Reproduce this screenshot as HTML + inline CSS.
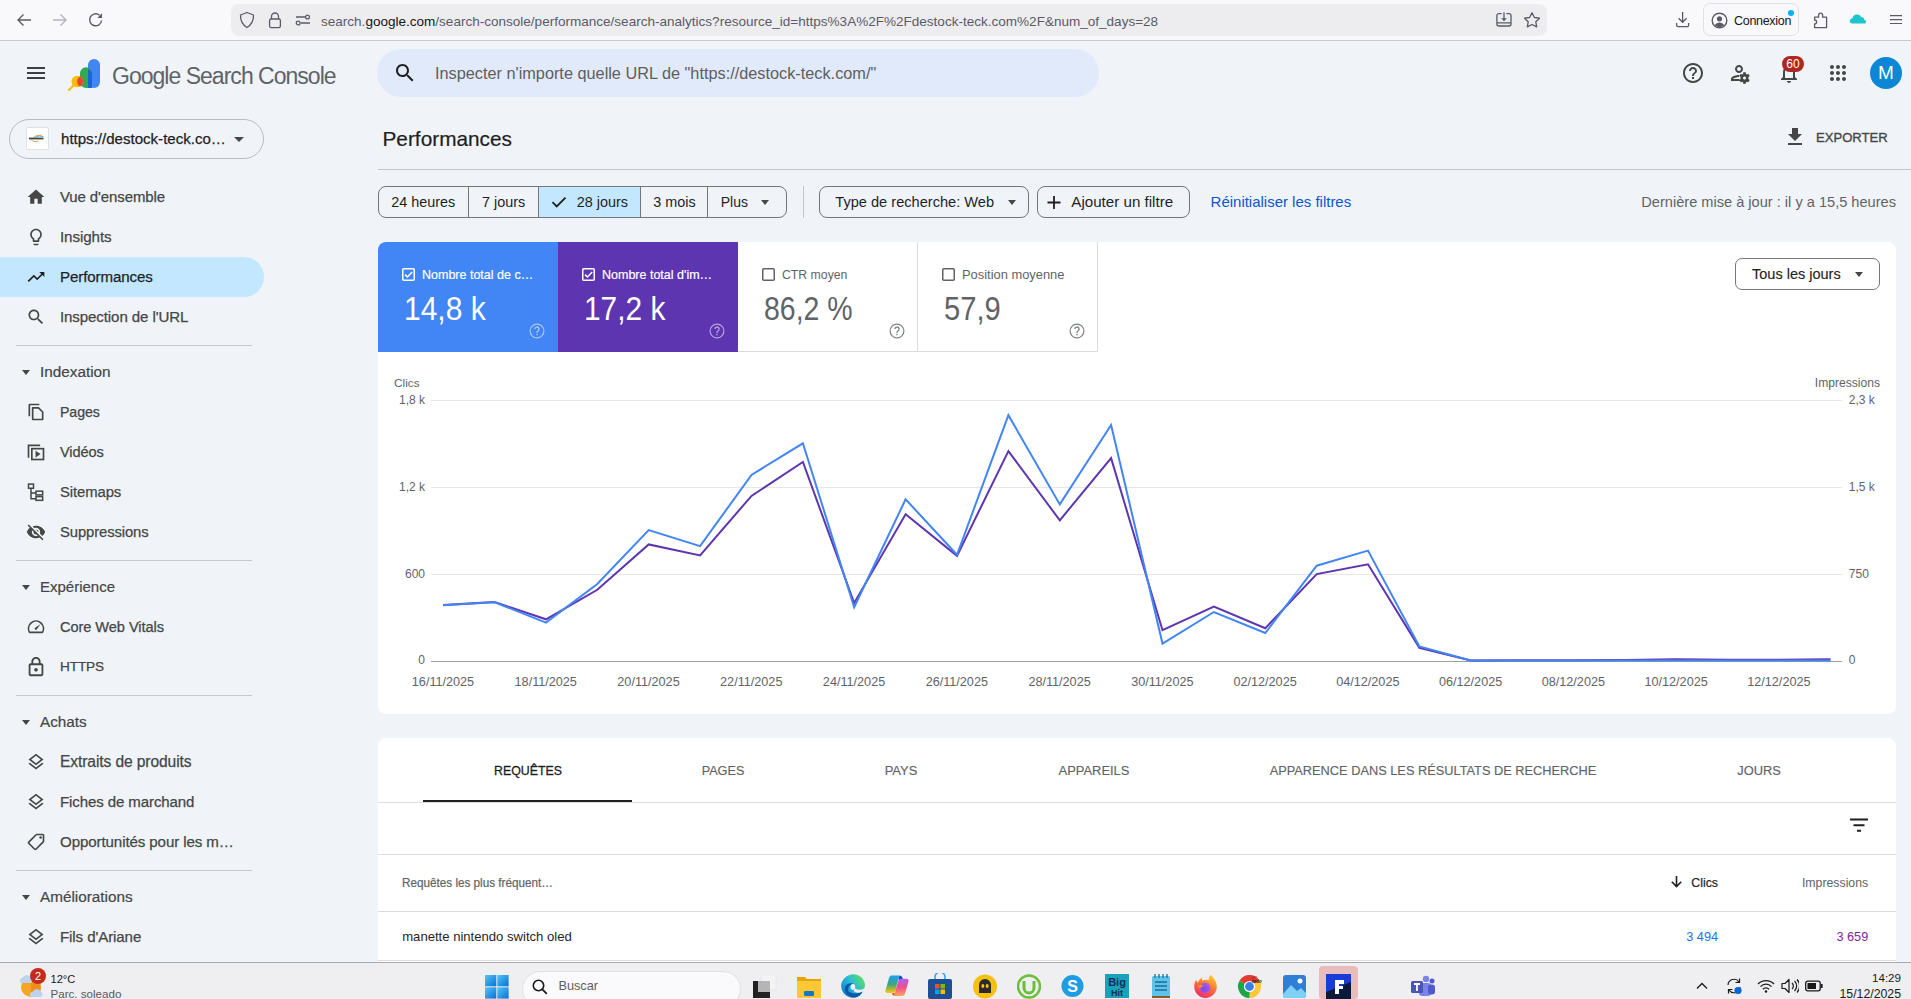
<!DOCTYPE html>
<html><head><meta charset="utf-8">
<style>
*{box-sizing:border-box;margin:0;padding:0}
html,body{width:1911px;height:999px;overflow:hidden;background:#f0f4f9;font-family:"Liberation Sans",sans-serif;color:#1f1f1f}
.a{position:absolute;white-space:nowrap}
svg{display:block}
/* browser chrome */
#chrome{position:absolute;left:0;top:0;width:1911px;height:41px;background:#f9f9fb;border-bottom:1px solid #c9c9cb}
#url{position:absolute;left:231px;top:4px;width:1316px;height:32px;background:#ededf0;border-radius:8px}
/* sidebar */
.nav{position:absolute;left:60px;font-size:15px;color:#444746;line-height:20px;letter-spacing:-0.1px}
.navi{position:absolute;left:27px;width:18px;height:18px}
.sec{position:absolute;left:40px;font-size:15px;color:#444746;line-height:20px}
.tri{position:absolute;left:22px;width:0;height:0;border-left:4.5px solid transparent;border-right:4.5px solid transparent;border-top:5px solid #444746}
.div{position:absolute;left:16px;width:236px;height:1px;background:#c7c7c7}
/* chips */
.chip{position:absolute;top:186px;height:32px;border:1px solid #747775;font-size:15px;color:#1f1f1f;line-height:30px}
/* tiles */
.tile{position:absolute;top:242px;height:110px;width:180px}
.tlab{position:absolute;left:43px;top:266px;font-size:13px;line-height:16px}
.tval{position:absolute;left:24px;top:288px;font-size:33px;line-height:40px}
/* chart */
.ylab{position:absolute;font-size:12px;color:#5f6368;line-height:14px}
.xlab{position:absolute;top:674px;font-size:12.6px;color:#5f6368;line-height:14px;width:100px;text-align:center}
.tab{position:absolute;top:762px;font-size:15px;color:#5f6368;line-height:16px}
</style></head><body>

<!-- ============ BROWSER CHROME ============ -->
<div id="chrome"></div>
<div id="url"></div>
<svg class="a" style="left:16px;top:13px" width="16" height="14" viewBox="0 0 16 14"><path d="M15 7H2M7.5 1.5L2 7l5.5 5.5" fill="none" stroke="#5b5b66" stroke-width="1.4"/></svg>
<svg class="a" style="left:52px;top:13px" width="16" height="14" viewBox="0 0 16 14"><path d="M1 7h13M8.5 1.5L14 7l-5.5 5.5" fill="none" stroke="#b4b4bb" stroke-width="1.4"/></svg>
<svg class="a" style="left:88px;top:12px" width="16" height="16" viewBox="0 0 16 16"><path d="M13.6 8.5A6 6 0 1 1 11.5 3.2" fill="none" stroke="#5b5b66" stroke-width="1.4"/><path d="M14 1.2V6H9.3z" fill="#5b5b66"/></svg>
<svg class="a" style="left:239px;top:11px" width="16" height="18" viewBox="0 0 16 18"><path d="M8 1.5L14.5 4c.2 5.5-1.8 9.5-6.5 12.5C3.3 13.5 1.3 9.5 1.5 4z" fill="none" stroke="#5b5b66" stroke-width="1.3" stroke-linejoin="round"/></svg>
<svg class="a" style="left:268px;top:11px" width="14" height="18" viewBox="0 0 14 18"><path d="M3.5 8V5.5a3.5 3.5 0 0 1 7 0V8" fill="none" stroke="#5b5b66" stroke-width="1.3"/><rect x="1.6" y="8" width="10.8" height="8.6" rx="1.6" fill="none" stroke="#5b5b66" stroke-width="1.3"/></svg>
<svg class="a" style="left:295px;top:14px" width="16" height="12" viewBox="0 0 16 12"><path d="M1 3h9M6 9h9" stroke="#5b5b66" stroke-width="1.3"/><circle cx="12.5" cy="3" r="1.9" fill="none" stroke="#5b5b66" stroke-width="1.3"/><circle cx="3.2" cy="9" r="1.9" fill="none" stroke="#5b5b66" stroke-width="1.3"/></svg>
<div class="a" style="left:321px;top:12.8px;font-size:13.54px;line-height:18px;color:#5b5b66">search.<span style="color:#15141a">google.com</span>/search-console/performance/search-analytics?resource_id=https%3A%2F%2Fdestock-teck.com%2F&amp;num_of_days=28</div>
<svg class="a" style="left:1494px;top:10px" width="20" height="20" viewBox="0 0 20 20"><path d="M7.6 3.6H4.9a2 2 0 0 0-2 2V14a2 2 0 0 0 2 2H15a2 2 0 0 0 2-2V5.6a2 2 0 0 0-2-2H12.4M2.9 12.9H17M10 2.2V9" fill="none" stroke="#5b5b66" stroke-width="1.3"/><path d="M7.2 8.2h5.6L10 11.2z" fill="#5b5b66"/></svg>
<svg class="a" style="left:1522px;top:11px" width="20" height="18" viewBox="0 0 20 18"><path d="M10 1.8l2.4 4.7 5.1.7-3.7 3.6.9 5.1L10 13.5l-4.7 2.4.9-5.1-3.7-3.6 5.1-.7z" fill="none" stroke="#5b5b66" stroke-width="1.3" stroke-linejoin="round"/></svg>
<svg class="a" style="left:1674px;top:10px" width="17" height="18" viewBox="0 0 17 18"><path d="M8.6 2.1V12.3M4.6 8.3l4 4 4-4M2.6 13v2.2a1.4 1.4 0 0 0 1.4 1.4h9.2a1.4 1.4 0 0 0 1.4-1.4V13" fill="none" stroke="#5b5b66" stroke-width="1.3"/></svg>
<div class="a" style="left:1703px;top:3.3px;width:96px;height:33px;border:1px solid #e0e0e6;border-radius:7px;background:#f9f9fb"></div>
<svg class="a" style="left:1711px;top:12px" width="17" height="17" viewBox="0 0 17 17"><circle cx="8.5" cy="8.5" r="7.3" fill="none" stroke="#5b5b66" stroke-width="1.4"/><circle cx="8.5" cy="6.8" r="2.6" fill="#5b5b66"/><path d="M3.8 13.2c1.2-2 2.8-2.8 4.7-2.8s3.5.8 4.7 2.8c-1.3 1.2-3 1.8-4.7 1.8s-3.4-.6-4.7-1.8z" fill="#5b5b66"/></svg>
<div class="a" style="left:1734px;top:13.2px;font-size:12.5px;letter-spacing:-0.3px;line-height:17px;color:#15141a">Connexion</div>
<div class="a" style="left:1788px;top:9.8px;width:6px;height:6px;border-radius:3px;background:#00b3f4"></div>
<svg class="a" style="left:1812px;top:10px" width="17" height="20" viewBox="0 0 17 20"><path d="M2.6 7.2H6.6V5.2a2 2 0 0 1 4 0V7.2H14.6V17.6H2.6V14a2 2 0 0 0 0-4z" fill="none" stroke="#5b5b66" stroke-width="1.3" stroke-linejoin="round"/></svg>
<svg class="a" style="left:1849px;top:13px" width="18" height="12" viewBox="0 0 18 12"><path d="M3.6 10.6a2.6 2.6 0 0 1-.3-5.2A4.8 4.8 0 0 1 12.2 4a2.8 2.8 0 0 1 2.9 2.8 1.9 1.9 0 0 1 .1 3.8z" fill="#1ac5cb"/></svg>
<svg class="a" style="left:1889px;top:13px" width="14" height="13" viewBox="0 0 14 13"><path d="M1 2.6h12M1 6.6h12M1 10.5h12" stroke="#5b5b66" stroke-width="1.2"/></svg>

<!-- ============ GSC HEADER ============ -->
<svg class="a" style="left:27px;top:66px" width="18" height="14" viewBox="0 0 18 14"><path d="M0 2h18M0 7h18M0 12h18" stroke="#3c4043" stroke-width="2"/></svg>
<svg class="a" style="left:66px;top:57px" width="36" height="34" viewBox="0 0 36 34"><rect x="22" y="2" width="12" height="29" rx="6" fill="#4285f4"/><path d="M20 10.2a6 6 0 0 1 6 6V31h-6a6 6 0 0 1-6-6v-8.8a6 6 0 0 1 6-6z" fill="#34a853"/><path d="M22 31V12a6 6 0 0 1 4 4.2V31z" fill="#1967d2"/><circle cx="11.3" cy="24.5" r="5.8" fill="#fbbc04"/><path d="M14 19.4a5.8 5.8 0 0 1 0 10.2 6 6 0 0 1 0-10.2z" fill="#ea4335"/><path d="M3 33l5-5" stroke="#fbbc04" stroke-width="2.2" stroke-linecap="round"/></svg>
<div class="a" style="left:112px;top:62.83px;font-size:23px;line-height:26px;letter-spacing:-0.98px;color:#5f6368">Google Search Console</div>
<div class="a" style="left:377px;top:49px;width:722px;height:48px;border-radius:24px;background:#e1eafa"></div>
<svg class="a" style="left:393px;top:61px" width="24" height="24" viewBox="0 0 24 24"><path fill="#1f1f1f" d="M15.5 14h-.79l-.28-.27C15.41 12.59 16 11.11 16 9.5 16 5.91 13.09 3 9.5 3S3 5.91 3 9.5 5.91 16 9.5 16c1.61 0 3.09-.59 4.23-1.57l.27.28v.79l5 4.99L20.49 19l-4.99-5zm-6 0C7.01 14 5 11.99 5 9.5S7.01 5 9.5 5 14 7.01 14 9.5 11.99 14 9.5 14z"/></svg>
<div class="a" style="left:435px;top:64.4px;font-size:16.3px;line-height:19px;color:#5e5e5e">Inspecter n'importe quelle URL de "https://destock-teck.com/"</div>
<svg class="a" style="left:1681px;top:61px" width="24" height="24" viewBox="0 0 24 24"><path fill="#444746" d="M11 18h2v-2h-2v2zm1-16C6.48 2 2 6.48 2 12s4.48 10 10 10 10-4.48 10-10S17.52 2 12 2zm0 18c-4.41 0-8-3.59-8-8s3.59-8 8-8 8 3.59 8 8-3.59 8-8 8zm0-14c-2.21 0-4 1.79-4 4h2c0-1.1.9-2 2-2s2 .9 2 2c0 2-3 1.75-3 5h2c0-2.25 3-2.5 3-5 0-2.21-1.79-4-4-4z"/></svg>
<svg class="a" style="left:1729px;top:61px" width="24" height="24" viewBox="0 0 24 24"><path fill="#444746" d="M10 12c2.21 0 4-1.79 4-4s-1.79-4-4-4-4 1.79-4 4 1.79 4 4 4zm0-6c1.1 0 2 .9 2 2s-.9 2-2 2-2-.9-2-2 .9-2 2-2zM4 18c.22-.72 3.31-2 6-2 0-.7.13-1.37.35-1.99C7.62 13.91 2 15.27 2 18v2h9.54c-.52-.58-.93-1.25-1.19-2H4z"/><path fill="#444746" d="M19.43 18.02c.04-.32.07-.64.07-.98s-.03-.66-.07-.98l1.11-.87a.26.26 0 0 0 .06-.34l-1.05-1.82a.26.26 0 0 0-.32-.12l-1.31.53c-.27-.21-.57-.38-.89-.52l-.2-1.39a.26.26 0 0 0-.26-.22h-2.1a.26.26 0 0 0-.26.22l-.2 1.39c-.32.13-.61.31-.89.52l-1.31-.53a.26.26 0 0 0-.32.12l-1.05 1.82a.26.26 0 0 0 .06.34l1.11.87c-.04.32-.07.65-.07.98s.03.66.07.98l-1.11.87a.26.26 0 0 0-.06.34l1.05 1.82c.06.12.2.16.32.12l1.31-.53c.27.21.57.38.89.52l.2 1.39c.02.13.13.22.26.22h2.1c.13 0 .24-.09.26-.22l.2-1.39c.32-.13.61-.31.89-.52l1.31.53c.12.05.26 0 .32-.12l1.05-1.82a.26.26 0 0 0-.06-.34l-1.11-.87zM15.5 18.54c-.83 0-1.5-.67-1.5-1.5s.67-1.5 1.5-1.5 1.5.67 1.5 1.5-.67 1.5-1.5 1.5z"/></svg>
<svg class="a" style="left:1777px;top:61px" width="24" height="24" viewBox="0 0 24 24"><path fill="#444746" d="M12 22c1.1 0 2-.9 2-2h-4c0 1.1.9 2 2 2zm6-6v-5c0-3.07-1.64-5.64-4.5-6.32V4c0-.83-.67-1.5-1.5-1.5s-1.5.67-1.5 1.5v.68C7.63 5.36 6 7.92 6 11v5l-2 2v1h16v-1l-2-2zm-2 1H8v-6c0-2.48 1.51-4.5 4-4.5s4 2.02 4 4.5v6z"/></svg>
<div class="a" style="left:1782px;top:55.5px;width:22px;height:16px;border-radius:8px;background:#b3261e;color:#fff;font-size:12px;line-height:16px;text-align:center">60</div>
<svg class="a" style="left:1826px;top:61px" width="24" height="24" viewBox="0 0 24 24"><path fill="#444746" d="M6 8c1.1 0 2-.9 2-2s-.9-2-2-2-2 .9-2 2 .9 2 2 2zm6 12c1.1 0 2-.9 2-2s-.9-2-2-2-2 .9-2 2 .9 2 2 2zm-6 0c1.1 0 2-.9 2-2s-.9-2-2-2-2 .9-2 2 .9 2 2 2zm0-6c1.1 0 2-.9 2-2s-.9-2-2-2-2 .9-2 2 .9 2 2 2zm6 0c1.1 0 2-.9 2-2s-.9-2-2-2-2 .9-2 2 .9 2 2 2zm4-8c0 1.1.9 2 2 2s2-.9 2-2-.9-2-2-2-2 .9-2 2zm-4 2c1.1 0 2-.9 2-2s-.9-2-2-2-2 .9-2 2 .9 2 2 2zm6 6c1.1 0 2-.9 2-2s-.9-2-2-2-2 .9-2 2 .9 2 2 2zm0 6c1.1 0 2-.9 2-2s-.9-2-2-2-2 .9-2 2 .9 2 2 2z"/></svg>
<div class="a" style="left:1870px;top:56.6px;width:32px;height:32px;border-radius:16px;background:#0b87d5;color:#fff;font-size:19px;line-height:32px;text-align:center">M</div>
<div class="a" style="left:8.5px;top:119px;width:255px;height:40px;border:1px solid #b9bcbf;border-radius:20px"></div>
<div class="a" style="left:25.5px;top:127.3px;width:23px;height:23px;background:#fff;border:1px solid #e0e0e0;border-radius:2px"></div>
<svg class="a" style="left:25px;top:127px" width="24" height="24" viewBox="0 0 24 24"><path d="M8.3 10.4Q11 7.6 17 8.2" fill="none" stroke="#f5a84a" stroke-width="1"/><path d="M10.2 10.4Q14 8 18.4 9.6" fill="none" stroke="#45b4ea" stroke-width="1"/><rect x="4" y="10.6" width="14.5" height="1.8" fill="#444"/><path d="M6.2 12.8Q7 13.6 8 13.8" fill="none" stroke="#45b4ea" stroke-width=".8"/><path d="M8.2 14Q11 15.4 13.5 13.6" fill="none" stroke="#f5a84a" stroke-width="1.1"/></svg>
<div class="a" style="left:61px;top:129.5px;font-size:15.07px;line-height:18px;color:#1f1f1f;-webkit-text-stroke:0.25px #1f1f1f">https://destock-teck.co…</div>
<div class="a" style="left:234px;top:137px;width:0;height:0;border-left:5px solid transparent;border-right:5px solid transparent;border-top:5px solid #444746"></div>


<!-- ============ SIDEBAR ============ -->
<div class="a" style="left:0;top:257px;width:264px;height:40px;background:#c2e7ff;border-radius:0 20px 20px 0"></div>
<svg class="a" style="left:26.0px;top:187.0px" width="20" height="20" viewBox="0 0 24 24"><path fill="#444746" d="M10 20v-6h4v6h5v-8h3L12 3 2 12h3v8z"/></svg>
<div class="nav" style="top:187.2px;font-size:14.98px;color:#444746;-webkit-text-stroke:0.25px #444746">Vue d'ensemble</div>
<svg class="a" style="left:26.0px;top:227.0px" width="20" height="20" viewBox="0 0 24 24"><path fill="#444746" d="M9 21c0 .55.45 1 1 1h4c.55 0 1-.45 1-1v-1H9v1zm3-19C8.14 2 5 5.14 5 9c0 2.380 1.19 4.47 3 5.74V17c0 .55.45 1 1 1h6c.55 0 1-.45 1-1v-2.26c1.81-1.27 3-3.36 3-5.74 0-3.86-3.14-7-7-7zm2.85 11.1l-.85.6V16h-4v-2.3l-.85-.6C7.8 12.16 7 10.63 7 9c0-2.76 2.24-5 5-5s5 2.24 5 5c0 1.63-.8 3.16-2.150 4.1z"/></svg>
<div class="nav" style="top:227.2px;font-size:15.2px;color:#444746;-webkit-text-stroke:0.25px #444746">Insights</div>
<svg class="a" style="left:26.0px;top:267.0px" width="20" height="20" viewBox="0 0 24 24"><path fill="#1f1f1f" d="M16 6l2.29 2.29-4.88 4.88-4-4L2 16.59 3.41 18l6-6 4 4 6.3-6.29L22 12V6z"/></svg>
<div class="nav" style="top:267.2px;font-size:15.1px;color:#1f1f1f;-webkit-text-stroke:0.25px #1f1f1f">Performances</div>
<svg class="a" style="left:26.0px;top:307.0px" width="20" height="20" viewBox="0 0 24 24"><path fill="#444746" d="M15.5 14h-.79l-.28-.27C15.41 12.59 16 11.11 16 9.5 16 5.91 13.09 3 9.5 3S3 5.91 3 9.5 5.91 16 9.5 16c1.61 0 3.09-.59 4.23-1.57l.27.28v.79l5 4.99L20.49 19l-4.99-5zm-6 0C7.01 14 5 11.99 5 9.5S7.01 5 9.5 5 14 7.01 14 9.5 11.99 14 9.5 14z"/></svg>
<div class="nav" style="top:307.2px;font-size:15.07px;color:#444746;-webkit-text-stroke:0.25px #444746">Inspection de l'URL</div>
<div class="div" style="top:345px"></div>
<div class="tri" style="top:369.5px"></div>
<div class="sec" style="top:362.2px;font-size:15.3px;-webkit-text-stroke:0.2px #444746">Indexation</div>
<svg class="a" style="left:26.0px;top:402.0px" width="20" height="20" viewBox="0 0 24 24"><path fill="none" stroke="#444746" stroke-width="2" d="M4 17V3.5c0-.3.2-.5.5-.5H16"/><path fill="none" stroke="#444746" stroke-width="2" stroke-linejoin="round" d="M8 7h7l5 5v9H8z"/></svg>
<div class="nav" style="top:402.2px;font-size:14.2px;color:#444746;-webkit-text-stroke:0.25px #444746">Pages</div>
<svg class="a" style="left:26.0px;top:442.0px" width="20" height="20" viewBox="0 0 24 24"><path fill="none" stroke="#444746" stroke-width="2" d="M3 19V4h14"/><rect x="7" y="8" width="14" height="13" fill="none" stroke="#444746" stroke-width="2"/><path fill="#444746" d="M11.5 10.5v8l6-4z"/></svg>
<div class="nav" style="top:442.2px;font-size:14.6px;color:#444746;-webkit-text-stroke:0.25px #444746">Vidéos</div>
<svg class="a" style="left:26.0px;top:482.0px" width="20" height="20" viewBox="0 0 24 24"><g fill="none" stroke="#444746" stroke-width="1.8"><rect x="3" y="2.5" width="6" height="5"/><rect x="12" y="11" width="8" height="4.5"/><rect x="12" y="17.5" width="8" height="4.5"/><path d="M6 7.5V20h6M6 13.2h6"/></g></svg>
<div class="nav" style="top:482.2px;font-size:14.87px;color:#444746;-webkit-text-stroke:0.25px #444746">Sitemaps</div>
<svg class="a" style="left:26.0px;top:522.0px" width="20" height="20" viewBox="0 0 24 24"><path fill="#444746" d="M12 7c2.76 0 5 2.24 5 5 0 .65-.13 1.26-.36 1.830l2.92 2.92c1.51-1.26 2.7-2.89 3.43-4.75-1.73-4.39-6-7.5-11-7.5-1.4 0-2.74.25-3.98.7l2.16 2.16C10.74 7.13 11.35 7 12 7zM2 4.27l2.28 2.28.46.46C3.08 8.3 1.78 10.02 1 12c1.73 4.39 6 7.5 11 7.5 1.55 0 3.03-.3 4.38-.84l.42.42L19.73 22 21 20.73 3.27 3 2 4.27zM7.53 9.8l1.55 1.55c-.05.21-.08.43-.08.65 0 1.66 1.34 3 3 3 .22 0 .44-.03.65-.08l1.55 1.55c-.67.33-1.41.53-2.2.53-2.76 0-5-2.24-5-5 0-.79.2-1.53.53-2.2zm4.31-.78l3.15 3.15.02-.16c0-1.66-1.34-3-3-3l-.17.01z"/></svg>
<div class="nav" style="top:522.2px;font-size:14.82px;color:#444746;-webkit-text-stroke:0.25px #444746">Suppressions</div>
<div class="div" style="top:560px"></div>
<div class="tri" style="top:584.5px"></div>
<div class="sec" style="top:577.2px;font-size:15px;-webkit-text-stroke:0.2px #444746">Expérience</div>
<svg class="a" style="left:26.0px;top:617.0px" width="20" height="20" viewBox="0 0 24 24"><path fill="none" stroke="#444746" stroke-width="2" d="M4.3 18.5A9 9 0 1 1 19.7 18.5z" stroke-linejoin="round"/><path fill="#444746" d="M10.6 14.6a1.6 1.6 0 0 0 2.3.3l4.3-6.3-6.3 4.3a1.6 1.6 0 0 0-.3 1.7z"/></svg>
<div class="nav" style="top:617.2px;font-size:14.66px;color:#444746;-webkit-text-stroke:0.25px #444746">Core Web Vitals</div>
<svg class="a" style="left:25.0px;top:656.0px" width="22" height="22" viewBox="0 0 24 24"><path fill="#444746" d="M18 8h-1V6c0-2.76-2.24-5-5-5S7 3.24 7 6v2H6c-1.1 0-2 .9-2 2v10c0 1.1.9 2 2 2h12c1.1 0 2-.9 2-2V10c0-1.1-.9-2-2-2zM9 6c0-1.66 1.34-3 3-3s3 1.34 3 3v2H9V6zm9 14H6V10h12v10zm-6-3c1.1 0 2-.9 2-2s-.9-2-2-2-2 .9-2 2 .9 2 2 2z"/></svg>
<div class="nav" style="top:657.2px;font-size:13.6px;color:#444746;-webkit-text-stroke:0.25px #444746">HTTPS</div>
<div class="div" style="top:695px"></div>
<div class="tri" style="top:719.5px"></div>
<div class="sec" style="top:712.2px;font-size:15.3px;-webkit-text-stroke:0.2px #444746">Achats</div>
<svg class="a" style="left:26.0px;top:752.0px" width="20" height="20" viewBox="0 0 24 24"><path fill="#444746" d="M11.99 18.54l-7.37-5.73L3 14.07l9 7 9-7-1.63-1.27-7.38 5.74zM12 16l7.36-5.73L21 9l-9-7-9 7 1.63 1.27L12 16zm0-11.47L17.74 9 12 13.47 6.26 9 12 4.53z"/></svg>
<div class="nav" style="top:752.2px;font-size:15.6px;color:#444746;-webkit-text-stroke:0.25px #444746">Extraits de produits</div>
<svg class="a" style="left:26.0px;top:792.0px" width="20" height="20" viewBox="0 0 24 24"><path fill="#444746" d="M11.99 18.54l-7.37-5.73L3 14.07l9 7 9-7-1.63-1.27-7.38 5.74zM12 16l7.36-5.73L21 9l-9-7-9 7 1.63 1.27L12 16zm0-11.47L17.74 9 12 13.47 6.26 9 12 4.53z"/></svg>
<div class="nav" style="top:792.2px;font-size:15.04px;color:#444746;-webkit-text-stroke:0.25px #444746">Fiches de marchand</div>
<svg class="a" style="left:26.0px;top:832.0px" width="20" height="20" viewBox="0 0 24 24"><g transform="translate(24 0) scale(-1 1)"><path fill="#444746" d="M21.41 11.41l-8.83-8.83c-.37-.37-.88-.58-1.41-.58H4c-1.1 0-2 .9-2 2v7.17c0 .53.21 1.04.59 1.41l8.83 8.83c.78.78 2.05.78 2.83 0l7.17-7.17c.78-.78.78-2.04-.01-2.83zM12.83 20L4 11.17V4h7.17L20 12.83 12.83 20z"/><circle cx="6.5" cy="6.5" r="1.5" fill="#444746"/></g></svg>
<div class="nav" style="top:832.2px;font-size:15.1px;color:#444746;-webkit-text-stroke:0.25px #444746">Opportunités pour les m…</div>
<div class="div" style="top:870px"></div>
<div class="tri" style="top:894.5px"></div>
<div class="sec" style="top:887.2px;font-size:15.3px;-webkit-text-stroke:0.2px #444746">Améliorations</div>
<svg class="a" style="left:26.0px;top:927.0px" width="20" height="20" viewBox="0 0 24 24"><path fill="#444746" d="M11.99 18.54l-7.37-5.73L3 14.07l9 7 9-7-1.63-1.27-7.38 5.74zM12 16l7.36-5.73L21 9l-9-7-9 7 1.63 1.27L12 16zm0-11.47L17.74 9 12 13.47 6.26 9 12 4.53z"/></svg>
<div class="nav" style="top:927.2px;font-size:15.08px;color:#444746;-webkit-text-stroke:0.25px #444746">Fils d'Ariane</div>
<!-- ============ MAIN ============ -->
<div class="a" style="left:382.5px;top:127.13px;font-size:20.8px;line-height:1.15;color:#1f1f1f;-webkit-text-stroke:0.2px #1f1f1f">Performances</div>
<svg class="a" style="left:1783px;top:125px" width="24" height="24" viewBox="0 0 24 24"><path fill="#444746" d="M19 9h-4V3H9v6H5l7 7 7-7zM5 18v2h14v-2H5z"/></svg>
<div class="a" style="left:1815.6px;top:130.28px;font-size:13.7px;line-height:1.15;color:#444746;transform:scaleX(0.955);transform-origin:0 0;-webkit-text-stroke:0.35px #444746">EXPORTER</div>
<div class="a" style="left:378px;top:169px;width:1533px;height:1px;background:#c4c7c5"></div>
<div class="a" style="left:378px;top:186px;width:409px;height:32px;border:1px solid #747775;border-radius:8px;overflow:hidden"><div style="position:absolute;left:160px;top:0;width:102px;height:30px;background:#c2e7ff"></div></div>
<div class="a" style="left:468.0px;top:186px;width:1px;height:32px;background:#747775"></div>
<div class="a" style="left:538.0px;top:186px;width:1px;height:32px;background:#747775"></div>
<div class="a" style="left:639.9px;top:186px;width:1px;height:32px;background:#747775"></div>
<div class="a" style="left:707.0px;top:186px;width:1px;height:32px;background:#747775"></div>
<div class="a" style="left:391.2px;top:193.53px;font-size:14.4px;line-height:1.15;color:#1f1f1f;">24 heures</div>
<div class="a" style="left:482.1px;top:193.53px;font-size:14.4px;line-height:1.15;color:#1f1f1f;">7 jours</div>
<svg class="a" style="left:551px;top:196px" width="16" height="12" viewBox="0 0 16 12"><path d="M1.5 6.2l4.2 4.2L14.5 1.6" fill="none" stroke="#1f1f1f" stroke-width="1.8"/></svg>
<div class="a" style="left:576.7px;top:193.53px;font-size:14.4px;line-height:1.15;color:#1f1f1f;">28 jours</div>
<div class="a" style="left:653.2px;top:193.53px;font-size:14.4px;line-height:1.15;color:#1f1f1f;">3 mois</div>
<div class="a" style="left:720.7px;top:193.90px;font-size:14.0px;line-height:1.15;color:#1f1f1f;">Plus</div>
<div class="a" style="left:760.5px;top:200px;width:0;height:0;border-left:4.5px solid transparent;border-right:4.5px solid transparent;border-top:5px solid #444746"></div>
<div class="a" style="left:803px;top:186px;width:1px;height:32px;background:#c4c7c5"></div>
<div class="a" style="left:819px;top:186px;width:210px;height:32px;border:1px solid #747775;border-radius:8px"></div>
<div class="a" style="left:835.3px;top:194.15px;font-size:14.6px;line-height:1.15;color:#1f1f1f;">Type de recherche: Web</div>
<div class="a" style="left:1007.5px;top:200px;width:0;height:0;border-left:4.5px solid transparent;border-right:4.5px solid transparent;border-top:5px solid #444746"></div>
<div class="a" style="left:1037px;top:186px;width:153px;height:32px;border:1px solid #747775;border-radius:8px"></div>
<svg class="a" style="left:1047px;top:196px" width="14" height="13" viewBox="0 0 14 13"><path d="M7 0v13M0.5 6.5h13" stroke="#1f1f1f" stroke-width="1.8"/></svg>
<div class="a" style="left:1071.3px;top:193.04px;font-size:15.15px;line-height:1.15;color:#1f1f1f;">Ajouter un filtre</div>
<div class="a" style="left:1210.6px;top:193.21px;font-size:14.97px;line-height:1.15;color:#0b57d0;">Réinitialiser les filtres</div>
<div class="a" style="right:15px;top:193.55px;font-size:14.6px;line-height:1.15;color:#5f6368;text-align:right;">Dernière mise à jour : il y a 15,5 heures</div>
<div class="a" style="left:378px;top:242px;width:1518px;height:472px;background:#fff;border-radius:8px"></div>
<div class="a" style="left:378px;top:242px;width:180px;height:110px;background:#4285f4;border-radius:8px 0 0 0"></div>
<div class="a" style="left:558px;top:242px;width:180px;height:110px;background:#5e35b1"></div>
<div class="a" style="left:738px;top:242px;width:360px;height:110px;border-right:1px solid #dadce0;border-bottom:1px solid #dadce0"></div>
<div class="a" style="left:917px;top:242px;width:1px;height:110px;background:#dadce0"></div>
<svg class="a" style="left:402px;top:268px" width="13" height="13" viewBox="0 0 13 13"><rect x="0.75" y="0.75" width="11.5" height="11.5" rx="1" fill="none" stroke="#fff" stroke-width="1.5"/><path d="M3 6.6l2.4 2.4L10.2 4" fill="none" stroke="#fff" stroke-width="1.5"/></svg>
<svg class="a" style="left:582px;top:268px" width="13" height="13" viewBox="0 0 13 13"><rect x="0.75" y="0.75" width="11.5" height="11.5" rx="1" fill="none" stroke="#fff" stroke-width="1.5"/><path d="M3 6.6l2.4 2.4L10.2 4" fill="none" stroke="#fff" stroke-width="1.5"/></svg>
<svg class="a" style="left:762px;top:268px" width="13" height="13" viewBox="0 0 13 13"><rect x="0.75" y="0.75" width="11.5" height="11.5" rx="1" fill="none" stroke="#5f6368" stroke-width="1.5"/></svg>
<svg class="a" style="left:942px;top:268px" width="13" height="13" viewBox="0 0 13 13"><rect x="0.75" y="0.75" width="11.5" height="11.5" rx="1" fill="none" stroke="#5f6368" stroke-width="1.5"/></svg>
<div class="a" style="left:421.5px;top:267.04px;font-size:13.2px;line-height:1.15;color:#fff;transform:scaleX(0.948);transform-origin:0 0;-webkit-text-stroke:0.2px #fff">Nombre total de c…</div>
<div class="a" style="left:601.5px;top:267.04px;font-size:13.2px;line-height:1.15;color:#fff;transform:scaleX(0.948);transform-origin:0 0;-webkit-text-stroke:0.2px #fff">Nombre total d'im…</div>
<div class="a" style="left:781.5px;top:267.04px;font-size:13.2px;line-height:1.15;color:#5f6368;transform:scaleX(0.93);transform-origin:0 0;">CTR moyen</div>
<div class="a" style="left:961.5px;top:267.04px;font-size:13.2px;line-height:1.15;color:#5f6368;transform:scaleX(0.977);transform-origin:0 0;">Position moyenne</div>
<div class="a" style="left:403.5px;top:289.71px;font-size:33.2px;line-height:1.15;color:#fff;transform:scaleX(0.904);transform-origin:0 0;">14,8 k</div>
<div class="a" style="left:584px;top:289.71px;font-size:33.2px;line-height:1.15;color:#fff;transform:scaleX(0.9);transform-origin:0 0;">17,2 k</div>
<div class="a" style="left:763.5px;top:289.71px;font-size:33.2px;line-height:1.15;color:#5f6368;transform:scaleX(0.857);transform-origin:0 0;">86,2 %</div>
<div class="a" style="left:944px;top:289.71px;font-size:33.2px;line-height:1.15;color:#5f6368;transform:scaleX(0.878);transform-origin:0 0;">57,9</div>
<svg class="a" style="left:529px;top:323px;opacity:0.55" width="16" height="16" viewBox="0 0 16 16"><circle cx="8" cy="8" r="6.9" fill="none" stroke="#fff" stroke-width="1.2"/><path d="M5.9 6.1a2.1 2.1 0 1 1 3 1.9c-.6.3-.9.7-.9 1.4v.5" fill="none" stroke="#fff" stroke-width="1.3"/><circle cx="8" cy="11.6" r=".8" fill="#fff"/></svg>
<svg class="a" style="left:709px;top:323px;opacity:0.55" width="16" height="16" viewBox="0 0 16 16"><circle cx="8" cy="8" r="6.9" fill="none" stroke="#fff" stroke-width="1.2"/><path d="M5.9 6.1a2.1 2.1 0 1 1 3 1.9c-.6.3-.9.7-.9 1.4v.5" fill="none" stroke="#fff" stroke-width="1.3"/><circle cx="8" cy="11.6" r=".8" fill="#fff"/></svg>
<svg class="a" style="left:889px;top:323px;opacity:0.8" width="16" height="16" viewBox="0 0 16 16"><circle cx="8" cy="8" r="6.9" fill="none" stroke="#5f6368" stroke-width="1.2"/><path d="M5.9 6.1a2.1 2.1 0 1 1 3 1.9c-.6.3-.9.7-.9 1.4v.5" fill="none" stroke="#5f6368" stroke-width="1.3"/><circle cx="8" cy="11.6" r=".8" fill="#5f6368"/></svg>
<svg class="a" style="left:1069px;top:323px;opacity:0.8" width="16" height="16" viewBox="0 0 16 16"><circle cx="8" cy="8" r="6.9" fill="none" stroke="#5f6368" stroke-width="1.2"/><path d="M5.9 6.1a2.1 2.1 0 1 1 3 1.9c-.6.3-.9.7-.9 1.4v.5" fill="none" stroke="#5f6368" stroke-width="1.3"/><circle cx="8" cy="11.6" r=".8" fill="#5f6368"/></svg>
<div class="a" style="left:1735px;top:258px;width:145px;height:32px;border:1px solid #747775;border-radius:7px;background:#fff"></div>
<div class="a" style="left:1752px;top:265.64px;font-size:14.5px;line-height:1.15;color:#1f1f1f;-webkit-text-stroke:0.15px #1f1f1f">Tous les jours</div>
<div class="a" style="left:1855px;top:272px;width:0;height:0;border-left:4.5px solid transparent;border-right:4.5px solid transparent;border-top:5px solid #444746"></div>
<svg class="a" style="left:0;top:0" width="1911" height="999" viewBox="0 0 1911 999"><path d="M431 400.5H1842" stroke="#e6e6e6" stroke-width="1"/><path d="M431 487.5H1842" stroke="#e6e6e6" stroke-width="1"/><path d="M431 574.5H1842" stroke="#e6e6e6" stroke-width="1"/><path d="M431 661.5H1842" stroke="#9aa0a6" stroke-width="1"/><polyline fill="none" stroke="#5e35b1" stroke-width="2" stroke-linejoin="miter" points="443.2,605 494.6,602 546.0,619.3 597.3,589.8 648.7,544.4 700.1,555.4 751.5,495.9 802.9,462 854.2,603 905.6,514.2 957.0,555.9 1008.4,451.1 1059.8,520.3 1111.1,458.1 1162.5,630.2 1213.9,606.6 1265.3,628.2 1316.7,574.1 1368.0,564.3 1419.4,647.8 1470.8,660.5 1522.2,660.3 1573.6,660.2 1624.9,660 1676.3,659.3 1727.7,659.8 1779.1,659.8 1830.5,659.3"/><polyline fill="none" stroke="#4285f4" stroke-width="2" stroke-linejoin="miter" points="443.2,605.2 494.6,602.2 546.0,622.6 597.3,584 648.7,530.1 700.1,546.1 751.5,474.9 802.9,443.3 854.2,607.2 905.6,499.3 957.0,554.8 1008.4,415.2 1059.8,504.4 1111.1,425 1162.5,643.6 1213.9,612 1265.3,633 1316.7,565.7 1368.0,550.6 1419.4,646.4 1470.8,660.5 1522.2,660.5 1573.6,660.5 1624.9,660.5 1676.3,660.5 1727.7,660.5 1779.1,660.5 1830.5,660.5"/></svg>
<div class="a" style="left:394.1px;top:377.13px;font-size:11.8px;line-height:1.15;color:#5f6368;">Clics</div>
<div class="a" style="right:31px;top:376.85px;font-size:12.1px;line-height:1.15;color:#5f6368;text-align:right;">Impressions</div>
<div class="a" style="right:1486px;top:393.54px;font-size:12px;line-height:1.15;color:#5f6368;text-align:right;">1,8 k</div>
<div class="a" style="left:1848.8px;top:393.54px;font-size:12px;line-height:1.15;color:#5f6368;">2,3 k</div>
<div class="a" style="right:1486px;top:480.74px;font-size:12px;line-height:1.15;color:#5f6368;text-align:right;">1,2 k</div>
<div class="a" style="left:1848.8px;top:480.74px;font-size:12px;line-height:1.15;color:#5f6368;">1,5 k</div>
<div class="a" style="right:1486px;top:567.64px;font-size:12px;line-height:1.15;color:#5f6368;text-align:right;">600</div>
<div class="a" style="left:1848.8px;top:567.64px;font-size:12px;line-height:1.15;color:#5f6368;">750</div>
<div class="a" style="right:1486px;top:654.44px;font-size:12px;line-height:1.15;color:#5f6368;text-align:right;">0</div>
<div class="a" style="left:1848.8px;top:654.44px;font-size:12px;line-height:1.15;color:#5f6368;">0</div>
<div class="a" style="left:43.0px;width:800px;top:674.94px;font-size:12.65px;line-height:1.15;color:#5f6368;text-align:center;">16/11/2025</div>
<div class="a" style="left:145.76px;width:800px;top:674.94px;font-size:12.65px;line-height:1.15;color:#5f6368;text-align:center;">18/11/2025</div>
<div class="a" style="left:248.51999999999998px;width:800px;top:674.94px;font-size:12.65px;line-height:1.15;color:#5f6368;text-align:center;">20/11/2025</div>
<div class="a" style="left:351.28px;width:800px;top:674.94px;font-size:12.65px;line-height:1.15;color:#5f6368;text-align:center;">22/11/2025</div>
<div class="a" style="left:454.03999999999996px;width:800px;top:674.94px;font-size:12.65px;line-height:1.15;color:#5f6368;text-align:center;">24/11/2025</div>
<div class="a" style="left:556.8000000000001px;width:800px;top:674.94px;font-size:12.65px;line-height:1.15;color:#5f6368;text-align:center;">26/11/2025</div>
<div class="a" style="left:659.56px;width:800px;top:674.94px;font-size:12.65px;line-height:1.15;color:#5f6368;text-align:center;">28/11/2025</div>
<div class="a" style="left:762.3200000000002px;width:800px;top:674.94px;font-size:12.65px;line-height:1.15;color:#5f6368;text-align:center;">30/11/2025</div>
<div class="a" style="left:865.0799999999999px;width:800px;top:674.94px;font-size:12.65px;line-height:1.15;color:#5f6368;text-align:center;">02/12/2025</div>
<div class="a" style="left:967.8400000000001px;width:800px;top:674.94px;font-size:12.65px;line-height:1.15;color:#5f6368;text-align:center;">04/12/2025</div>
<div class="a" style="left:1070.6000000000001px;width:800px;top:674.94px;font-size:12.65px;line-height:1.15;color:#5f6368;text-align:center;">06/12/2025</div>
<div class="a" style="left:1173.3600000000001px;width:800px;top:674.94px;font-size:12.65px;line-height:1.15;color:#5f6368;text-align:center;">08/12/2025</div>
<div class="a" style="left:1276.1200000000001px;width:800px;top:674.94px;font-size:12.65px;line-height:1.15;color:#5f6368;text-align:center;">10/12/2025</div>
<div class="a" style="left:1378.88px;width:800px;top:674.94px;font-size:12.65px;line-height:1.15;color:#5f6368;text-align:center;">12/12/2025</div>
<div class="a" style="left:378px;top:738px;width:1518px;height:240px;background:#fff;border-radius:8px 8px 0 0"></div>
<div class="a" style="left:378px;top:802px;width:1518px;height:1px;background:#dadce0"></div>
<div class="a" style="left:423px;top:800px;width:209px;height:2.2px;background:#1f1f1f"></div>
<div class="a" style="left:378px;top:854px;width:1518px;height:1px;background:#dadce0"></div>
<div class="a" style="left:378px;top:911px;width:1518px;height:1px;background:#dadce0"></div>
<div class="a" style="left:378px;top:960px;width:1518px;height:1px;background:#dadce0"></div>
<div class="a" style="left:127.5px;width:800px;top:762.55px;font-size:13.4px;line-height:1.15;color:#1f1f1f;text-align:center;transform:scaleX(0.922);transform-origin:50% 0;-webkit-text-stroke:0.3px #1f1f1f">REQUÊTES</div>
<div class="a" style="left:323px;width:800px;top:762.55px;font-size:13.4px;line-height:1.15;color:#5f6368;text-align:center;transform:scaleX(0.945);transform-origin:50% 0;-webkit-text-stroke:0.15px #5f6368">PAGES</div>
<div class="a" style="left:501.29999999999995px;width:800px;top:762.55px;font-size:13.4px;line-height:1.15;color:#5f6368;text-align:center;transform:scaleX(0.965);transform-origin:50% 0;-webkit-text-stroke:0.15px #5f6368">PAYS</div>
<div class="a" style="left:693.5px;width:800px;top:762.55px;font-size:13.4px;line-height:1.15;color:#5f6368;text-align:center;transform:scaleX(0.965);transform-origin:50% 0;-webkit-text-stroke:0.15px #5f6368">APPAREILS</div>
<div class="a" style="left:1033.3px;width:800px;top:762.55px;font-size:13.4px;line-height:1.15;color:#5f6368;text-align:center;transform:scaleX(0.955);transform-origin:50% 0;-webkit-text-stroke:0.15px #5f6368">APPARENCE DANS LES RÉSULTATS DE RECHERCHE</div>
<div class="a" style="left:1358.5px;width:800px;top:762.55px;font-size:13.4px;line-height:1.15;color:#5f6368;text-align:center;transform:scaleX(0.96);transform-origin:50% 0;-webkit-text-stroke:0.15px #5f6368">JOURS</div>
<svg class="a" style="left:1849px;top:817px" width="20" height="16" viewBox="0 0 20 16"><path d="M1 2.5h18M4.5 8.2h11M8 13.8h4" stroke="#1f1f1f" stroke-width="2"/></svg>
<div class="a" style="left:402.2px;top:875.57px;font-size:12.4px;line-height:1.15;color:#5f6368;transform:scaleX(0.945);transform-origin:0 0;-webkit-text-stroke:0.2px #5f6368">Requêtes les plus fréquent…</div>
<svg class="a" style="left:1670px;top:874px" width="13" height="14" viewBox="0 0 13 14"><path d="M6.5 2v10.5M1.8 7.8l4.7 4.7 4.7-4.7" fill="none" stroke="#1f1f1f" stroke-width="1.6"/></svg>
<div class="a" style="right:193px;top:875.97px;font-size:12.3px;line-height:1.15;color:#1f1f1f;text-align:right;-webkit-text-stroke:0.2px #1f1f1f">Clics</div>
<div class="a" style="right:42.799999999999955px;top:875.97px;font-size:12.3px;line-height:1.15;color:#5f6368;text-align:right;">Impressions</div>
<div class="a" style="left:402.2px;top:929.13px;font-size:13.1px;line-height:1.15;color:#1f1f1f;">manette nintendo switch oled</div>
<div class="a" style="right:193px;top:929.50px;font-size:12.7px;line-height:1.15;color:#1a73e8;text-align:right;">3 494</div>
<div class="a" style="right:42.799999999999955px;top:929.50px;font-size:12.7px;line-height:1.15;color:#7b1fa2;text-align:right;">3 659</div>
<!-- ============ TASKBAR ============ -->
<div class="a" style="left:0;top:961.8px;width:1911px;height:37.2px;background:#efeef0;border-top:1.2px solid #a9a9ab"></div>
<svg class="a" style="left:18px;top:970px" width="30" height="29" viewBox="0 0 30 29"><circle cx="13" cy="17" r="10" fill="#f5a524"/><path d="M13 7a10 10 0 0 1 0 20z" fill="#ef7d1a" opacity=".6"/><path d="M2 12a3.5 3.5 0 0 1 3-4.5 4 4 0 0 1 7.5 0A3 3 0 0 1 13 13H3z" fill="#bcd3ee"/><path d="M12 26a3.5 3.5 0 0 1 3-4.5 4 4 0 0 1 7.5 0A3 3 0 0 1 23 27H13z" fill="#bcd3ee"/></svg>
<div class="a" style="left:30px;top:968px;width:16px;height:16px;border-radius:8px;background:#c42b1c;color:#fff;font-size:11px;line-height:16px;text-align:center">2</div>
<div class="a" style="left:50.5px;top:972.77px;font-size:11.1px;line-height:1.15;color:#1a1a1a;">12°C</div>
<div class="a" style="left:50.5px;top:987.31px;font-size:11.6px;line-height:1.15;color:#5a5a5a;">Parc. soleado</div>
<svg class="a" style="left:485px;top:975px" width="24" height="24" viewBox="0 0 24 24"><defs><linearGradient id="wg" x1="0" y1="0" x2="1" y2="1"><stop offset="0" stop-color="#52c7f7"/><stop offset="1" stop-color="#0a6fd6"/></linearGradient></defs><rect x="0" y="0" width="11.3" height="11.3" fill="url(#wg)"/><rect x="12.3" y="0" width="11.3" height="11.3" fill="url(#wg)"/><rect x="0" y="12.3" width="11.3" height="11.3" fill="url(#wg)"/><rect x="12.3" y="12.3" width="11.3" height="11.3" fill="url(#wg)"/></svg>
<div class="a" style="left:521.5px;top:970.5px;width:219px;height:36px;border-radius:18px;background:#faf9fb;border:1px solid #e2e0e3"></div>
<svg class="a" style="left:532px;top:979px" width="16" height="16" viewBox="0 0 16 16"><circle cx="6.5" cy="6.5" r="5.2" fill="none" stroke="#1a1a1a" stroke-width="1.6"/><path d="M10.3 10.3l4.5 4.5" stroke="#1a1a1a" stroke-width="1.8"/></svg>
<div class="a" style="left:558.4px;top:979.25px;font-size:12.75px;line-height:1.15;color:#5d5d5d;">Buscar</div>
<svg class="a" style="left:752px;top:975px" width="25" height="23" viewBox="0 0 25 23"><rect x="9" y="0" width="15" height="15" fill="#f4f4f4" stroke="#e0e0e0" stroke-width=".6"/><rect x="1" y="6" width="17" height="17" fill="#222"/><rect x="6" y="6" width="12" height="11" fill="#b5b5b5"/></svg>
<svg class="a" style="left:796px;top:975px" width="26" height="23" viewBox="0 0 26 23"><path d="M1 2h8l2 2h14v18H1z" fill="#e5a50a"/><rect x="1" y="6" width="24" height="17" fill="#fcc934"/><rect x="8" y="16" width="10" height="5" rx="1" fill="#1a73c8"/></svg>
<svg class="a" style="left:841px;top:974px" width="24" height="24" viewBox="0 0 24 24"><defs><linearGradient id="eg1" x1="0" y1="0.9" x2="1" y2="0.2"><stop offset="0" stop-color="#0c78d4"/><stop offset=".55" stop-color="#2cbcd6"/><stop offset="1" stop-color="#5de05a"/></linearGradient></defs><path d="M12.5 0.3C19 0.3 24 5.5 24 11.5 24 14.6 22 16 19 16 16.5 16 14.8 15.4 14 14.6L21.6 17.6C19.6 21.5 16 23.8 12 23.8 5.5 23.8 0.2 18.5 0.2 12 0.2 5.5 6 0.3 12.5 0.3z" fill="url(#eg1)"/><path d="M7 16.5C7 12.5 9.5 9.8 13.2 10.4 11.3 9 8.8 9 6.8 10 3.8 11.6 3 15.6 4.8 19 6.8 22.5 10.8 23.9 14.5 23.5 17.6 23 20.2 21 21.6 17.6 18.6 19.6 14.2 20 11.2 19 9 18.3 7.2 17.8 7 16.5z" fill="#0b58a8"/><ellipse cx="11.9" cy="12.9" rx="2.3" ry="2.9" fill="#f2eff1"/><path d="M14 14.6C16.2 16 19.5 16.2 22.6 15.4L21.6 17.6C18.8 19.2 15.2 19 13 17.2 12.5 16.4 13.2 15.2 14 14.6z" fill="#efeef0"/></svg>
<svg class="a" style="left:885px;top:975px" width="24" height="22" viewBox="0 0 24 22"><defs><linearGradient id="cg1" x1="0" y1="0" x2="0" y2="1"><stop offset="0" stop-color="#19a3f7"/><stop offset=".5" stop-color="#3ea37c"/><stop offset="1" stop-color="#f9cc00"/></linearGradient><linearGradient id="cg2" x1="0" y1="0" x2="0" y2="1"><stop offset="0" stop-color="#b45df2"/><stop offset=".5" stop-color="#f2508c"/><stop offset="1" stop-color="#f9a55e"/></linearGradient></defs><path d="M14.5 0.5C16 0.5 17 1.5 17.5 3L18.6 6H14L13.5 3.5z" fill="#1442c9"/><path d="M6.3 0.5H14.6C13.2 4 12.2 8 10.6 15 10.1 17 9 18 7 18H2.5C1 18 0 17 0.5 15.5L4 3C4.5 1.5 5.2 0.5 6.3 0.5z" fill="url(#cg1)"/><path d="M7 18H11.6L10.6 21H9.2C8.1 21 7.3 20 7 18z" fill="#f05a2a"/><path d="M17 3.8H21.5C23 3.8 24 5 23.5 6.5L20 18.5C19.5 20 18.5 21 17 21H8.6C10 18 11 14 13 6.5 13.5 4.8 15 3.8 17 3.8z" fill="url(#cg2)"/></svg>
<svg class="a" style="left:928px;top:973px" width="24" height="26" viewBox="0 0 24 26"><path d="M7 6V4a5 5 0 0 1 10 0v2" fill="none" stroke="#35a5e8" stroke-width="1.6"/><rect x="0" y="6" width="24" height="20" rx="2" fill="#1c4f96"/><rect x="7" y="11" width="4.5" height="4.5" fill="#f25022"/><rect x="12.5" y="11" width="4.5" height="4.5" fill="#7fba00"/><rect x="7" y="16.5" width="4.5" height="4.5" fill="#00a4ef"/><rect x="12.5" y="16.5" width="4.5" height="4.5" fill="#ffb900"/></svg>
<svg class="a" style="left:973px;top:974px" width="24" height="25" viewBox="0 0 24 25"><circle cx="12" cy="12.5" r="12" fill="#f4c20d"/><path d="M6 19V11a6 6 0 0 1 12 0v8z" fill="#2a2a2a"/><ellipse cx="9.8" cy="12" rx="1.5" ry="2" fill="#f4c20d"/><ellipse cx="14.2" cy="12" rx="1.5" ry="2" fill="#f4c20d"/></svg>
<svg class="a" style="left:1017px;top:974px" width="24" height="25" viewBox="0 0 24 25"><circle cx="12" cy="12.5" r="11" fill="none" stroke="#6cbf3a" stroke-width="2.5"/><path d="M7 7v7a5 5 0 0 0 10 0V7" fill="none" stroke="#6cbf3a" stroke-width="3"/></svg>
<svg class="a" style="left:1061px;top:974px" width="23" height="24" viewBox="0 0 23 24"><circle cx="11.5" cy="12" r="11" fill="#1e9de3"/><text x="11.5" y="18" font-family="Liberation Sans" font-weight="700" font-size="16" fill="#fff" text-anchor="middle">S</text></svg>
<svg class="a" style="left:1105px;top:974px" width="24" height="24" viewBox="0 0 24 24"><rect width="24" height="24" fill="#19a2b8"/><text x="12" y="12" font-family="Liberation Sans" font-weight="700" font-size="11" fill="#0d2f5a" text-anchor="middle">Big</text><text x="12" y="22" font-family="Liberation Sans" font-weight="700" font-size="9" fill="#0d2f5a" text-anchor="middle">Hit</text></svg>
<svg class="a" style="left:1151px;top:973px" width="20" height="26" viewBox="0 0 20 26"><rect x="1" y="3" width="18" height="21" rx="1.5" fill="#5fc3e8"/><path d="M4 9h12M4 13h12M4 17h12" stroke="#1a6e9a" stroke-width="1.3"/><path d="M4 1v4M8 1v4M12 1v4M16 1v4" stroke="#1a6e9a" stroke-width="1.3"/><rect x="1" y="23" width="18" height="2" fill="#8a5a2b"/></svg>
<svg class="a" style="left:1193px;top:974px" width="25" height="25" viewBox="0 0 25 25"><defs><linearGradient id="ff1" x1=".8" y1="0" x2=".3" y2="1"><stop offset="0" stop-color="#ffd43a"/><stop offset=".45" stop-color="#ff7a2a"/><stop offset="1" stop-color="#f2296d"/></linearGradient><radialGradient id="ff2" cx=".4" cy=".6" r=".7"><stop offset="0" stop-color="#7b45e8"/><stop offset="1" stop-color="#b35ef5"/></radialGradient></defs><path d="M12.5 24C6.2 24 1.2 19 1.2 12.6 1.2 10 2 7.6 3.3 5.8 3.6 7.5 4.4 8.4 5 8.6 5.6 6.2 7.4 4.6 9.3 3.8 8.8 5.2 9 6.3 9.5 6.8 11 5.6 13.7 5.2 15.8 6.2 15.5 4 16.5 1.8 18.2 0.8 19.6 3.2 23.8 6.6 23.8 12.6 23.8 19 18.8 24 12.5 24z" fill="url(#ff1)"/><circle cx="12" cy="13.8" r="5.4" fill="url(#ff2)"/><path d="M5 11.5C7 10.5 9.5 10.8 11 12 9 12.2 7.6 13.2 7.2 14.6 6 14 5.2 12.8 5 11.5z" fill="#ff8a2a"/></svg>
<svg class="a" style="left:1237px;top:974px" width="25" height="25" viewBox="0 0 25 25"><path d="M12.5 12.5L2.54 6.75A11.5 11.5 0 0 1 22.46 6.75z" fill="#e33b2e"/><path d="M12.5 12.5L22.46 6.75A11.5 11.5 0 0 1 12.5 24z" fill="#fcc934"/><path d="M12.5 12.5L12.5 24A11.5 11.5 0 0 1 2.54 6.75z" fill="#1ea446"/><circle cx="12.5" cy="12.5" r="5.6" fill="#fff"/><circle cx="12.5" cy="12.5" r="4.4" fill="#3b7de9"/><path d="M15 4.5c1.5-1.2 3.5-2 5.3-1.4" fill="none" stroke="#7a2a2a" stroke-width=".7"/><text x="15" y="8.5" font-family="Liberation Sans" font-size="4.5" font-weight="700" fill="#222">indoy</text></svg>
<svg class="a" style="left:1283px;top:975px" width="23" height="23" viewBox="0 0 23 23"><rect width="23" height="23" rx="3" fill="#2f7fd6"/><path d="M0 19l8-9 6 6 4-3 5 5v2a3 3 0 0 1-3 3H3a3 3 0 0 1-3-3z" fill="#7fd0f5"/><circle cx="17" cy="6" r="2.5" fill="#fff"/></svg>
<div class="a" style="left:1319px;top:966px;width:39px;height:33px;background:#e8bcbc;border-radius:4px"></div>
<svg class="a" style="left:1326px;top:974px" width="25" height="25" viewBox="0 0 25 25"><rect width="25" height="25" fill="#0b1a3a"/><path d="M0 0h25v8L0 18z" fill="#1a3ad9"/><path d="M9 6h9v4h-5v2h4v3h-4v5H9z" fill="#fff"/></svg>
<svg class="a" style="left:1410px;top:975px" width="26" height="22" viewBox="0 0 26 22"><circle cx="16" cy="4" r="3.2" fill="#7b83eb"/><circle cx="22" cy="6" r="2.5" fill="#5059c9"/><rect x="9" y="8" width="12" height="13" rx="3" fill="#7b83eb"/><rect x="18" y="9.5" width="7" height="10" rx="3" fill="#5059c9"/><rect x="1" y="6" width="12" height="12" rx="1.5" fill="#4b53bc"/><path d="M4 9h6M7 9v7" stroke="#fff" stroke-width="1.8"/></svg>
<svg class="a" style="left:1696px;top:981px" width="12" height="9" viewBox="0 0 12 9"><path d="M1 7.5l5-5 5 5" fill="none" stroke="#1a1a1a" stroke-width="1.3"/></svg>
<svg class="a" style="left:1725px;top:977px" width="18" height="18" viewBox="0 0 18 18"><path d="M3 8a6 6 0 0 1 11-3" fill="none" stroke="#1a1a1a" stroke-width="1.2"/><path d="M14.5 1.5v4h-4" fill="none" stroke="#1a1a1a" stroke-width="1.2"/><path d="M15 10a6 6 0 0 1-11 3" fill="none" stroke="#1a1a1a" stroke-width="1.2"/><path d="M3.5 16.5v-4h4" fill="none" stroke="#1a1a1a" stroke-width="1.2"/><circle cx="13" cy="13.5" r="3.6" fill="#0a66d8"/></svg>
<svg class="a" style="left:1757px;top:979px" width="18" height="14" viewBox="0 0 18 14"><path d="M1 5a11 11 0 0 1 16 0M3.5 7.6a7.5 7.5 0 0 1 11 0M6 10.2a4 4 0 0 1 6 0" fill="none" stroke="#1a1a1a" stroke-width="1.3"/><circle cx="9" cy="12.5" r="1.2" fill="#1a1a1a"/></svg>
<svg class="a" style="left:1781px;top:978px" width="18" height="16" viewBox="0 0 18 16"><path d="M1 5.5h3l4-4v13l-4-4H1z" fill="none" stroke="#1a1a1a" stroke-width="1.2" stroke-linejoin="round"/><path d="M11 5a4 4 0 0 1 0 6M13.5 3a7 7 0 0 1 0 10M16 1.5a9.5 9.5 0 0 1 0 13" fill="none" stroke="#1a1a1a" stroke-width="1.2"/></svg>
<svg class="a" style="left:1805px;top:980px" width="18" height="12" viewBox="0 0 18 12"><rect x=".7" y="1.2" width="14.5" height="9.6" rx="2" fill="none" stroke="#1a1a1a" stroke-width="1.3"/><rect x="2.5" y="3" width="8.5" height="6" fill="#1a1a1a"/><rect x="15.8" y="4" width="1.8" height="4" fill="#1a1a1a"/></svg>
<div class="a" style="right:10px;top:971.31px;font-size:11.6px;line-height:1.15;color:#1a1a1a;text-align:right;">14:29</div>
<div class="a" style="right:10px;top:987.17px;font-size:12.3px;line-height:1.15;color:#1a1a1a;text-align:right;">15/12/2025</div>
</body></html>
